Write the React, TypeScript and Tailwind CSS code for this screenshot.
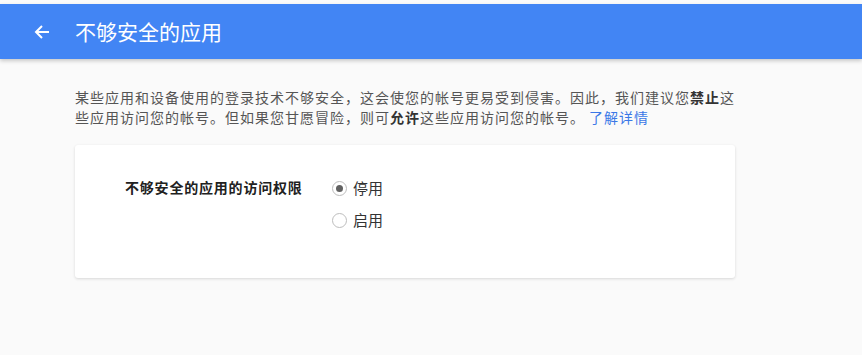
import React from 'react'

const font = { fontFamily: '"Noto Sans CJK SC", "Noto Sans", sans-serif' }

const Radio = ({ checked, label }: { checked?: boolean; label: string }) => (
  <label className="flex h-[32px] items-center gap-[6px]">
    <span className="flex h-[15px] w-[15px] items-center justify-center rounded-full border border-[#bdbdbd] bg-white">
      {checked && <span className="h-[7px] w-[7px] rounded-full bg-[#616161]" />}
    </span>
    <span className="text-[15px] text-[#333]">{label}</span>
  </label>
)

export default function App() {
  return (
    <div className="min-h-[355px] bg-[#fafafa] pt-[4px]" style={font}>
      <header className="flex h-[55px] items-center bg-[#4285f4] shadow-[0_2px_4px_rgba(0,0,0,0.2)]">
        <svg className="ml-[34px] h-[16px] w-[16px]" viewBox="0 0 16 16" fill="none" stroke="#fff" strokeWidth="2">
          <path d="M15 8H2M8 2L2 8l6 6" />
        </svg>
        <h1 className="ml-[25px] text-[21px] text-white">不够安全的应用</h1>
      </header>
      <main className="ml-[75px] w-[662px]">
        <p className="mt-[28px] text-[14px] leading-[20px] tracking-[1px] text-[#555]">
          某些应用和设备使用的登录技术不够安全，这会使您的帐号更易受到侵害。因此，我们建议您
          <b className="font-bold text-[#333]">禁止</b>这些应用访问您的帐号。但如果您甘愿冒险，则可
          <b className="font-bold text-[#333]">允许</b>这些应用访问您的帐号。
          <a className="ml-[4px] text-[#3b78e7]">了解详情</a>
        </p>
        <section className="mt-[18px] flex h-[133px] w-[660px] rounded-[3px] bg-white pl-[50px] pt-[27px] shadow-[0_1px_3px_rgba(0,0,0,0.14)]">
          <div className="w-[207px] pt-[5px] text-[14px] font-bold tracking-[0.8px] text-[#212121]">不够安全的应用的访问权限</div>
          <div className="flex flex-col">
            <Radio checked label="停用" />
            <Radio label="启用" />
          </div>
        </section>
      </main>
    </div>
  )
}
